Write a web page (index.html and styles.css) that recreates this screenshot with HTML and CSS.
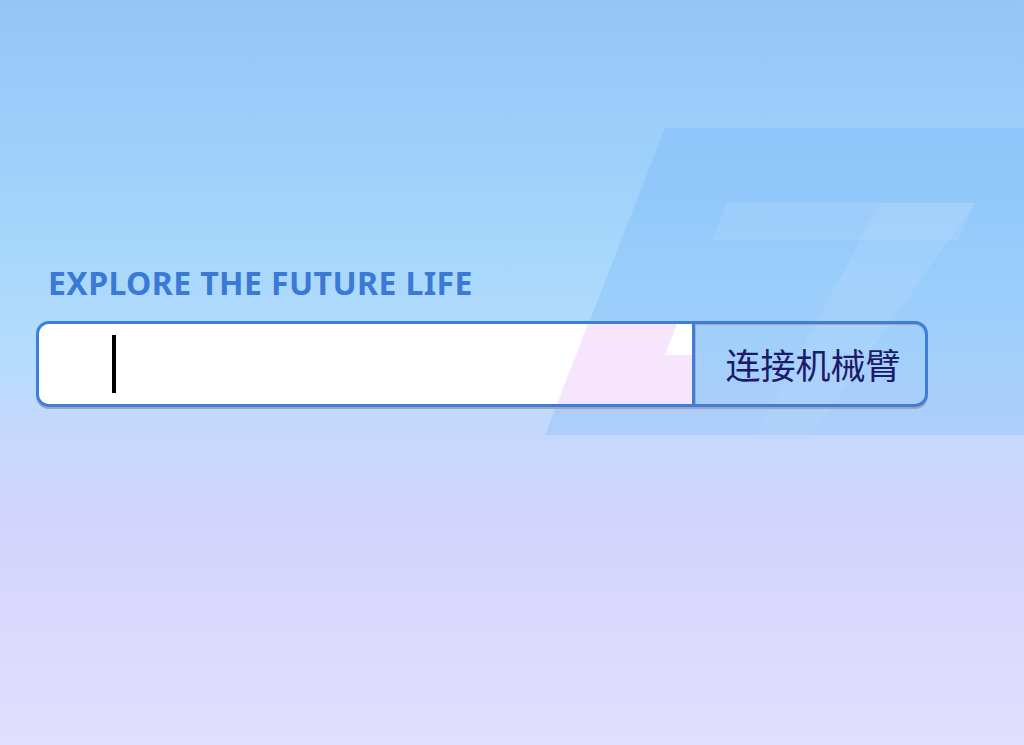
FILE: index.html
```html
<!DOCTYPE html>
<html lang="zh">
<head>
<meta charset="utf-8">
<title>Explore the future life</title>
<link rel="stylesheet" href="styles.css">
</head>
<body>
<div class="page">
  <svg class="bg-art" width="1024" height="745" viewBox="0 0 1024 745" aria-hidden="true">
    <polygon class="shape-main" points="665,128 1024,128 1024,435 545,435"/>
    <polygon class="shape-light" points="727,203 975,203 958,240 712,240"/>
    <polygon class="shape-light" points="880,203 975,203 810,437 755,437"/>
  </svg>
  <main class="content">
    <h1 class="title">EXPLORE THE FUTURE LIFE</h1>
    <div class="connect-bar">
      <div class="field">
        <svg class="field-art" width="653" height="80" viewBox="0 0 653 80" aria-hidden="true">
          <polygon class="field-pink" points="549,0 653,0 653,80 518,80"/>
          <polygon class="field-white" points="638,0 653,0 653,31 626,31"/>
        </svg>
        <span class="caret"></span>
      </div>
      <button class="connect-btn" type="button">连接机械臂</button>
    </div>
  </main>
</div>
</body>
</html>
```
FILE: styles.css
```css
html, body {
  margin: 0;
  padding: 0;
}
body {
  width: 1024px;
  height: 745px;
  overflow: hidden;
  font-family: "Noto Sans", "Noto Sans CJK SC", sans-serif;
  background: linear-gradient(180deg,
    #93c6f6 0px,
    #9dd0fa 160px,
    #a8d8fc 270px,
    #b6dcfc 360px,
    #c6d8fc 440px,
    #d2d4fc 520px,
    #dbd8fd 620px,
    #e2defe 745px);
}
.page {
  position: relative;
  width: 1024px;
  height: 745px;
}
.bg-art {
  position: absolute;
  left: 0;
  top: 0;
  z-index: 0;
}
.shape-main {
  fill: rgba(110, 175, 248, 0.26);
}
.shape-light {
  fill: rgba(190, 225, 255, 0.22);
}
.content {
  position: relative;
  z-index: 1;
  padding: 264px 0 0 36px;
}
.title {
  margin: 0 0 19px 12px;
  font-family: "Noto Sans", sans-serif;
  font-weight: 700;
  font-size: 32px;
  line-height: 38px;
  letter-spacing: 0.4px;
  color: #3b79d6;
}
.connect-bar {
  display: flex;
  width: 886px;
  height: 80px;
  border: 3px solid #3a80da;
  border-radius: 13px;
  overflow: hidden;
  box-shadow: 0 2px 0 #a4a2b4, inset 0 1px 0 #a6a8b8;
}
.field {
  position: relative;
  width: 653px;
  height: 80px;
  background: #ffffff;
  border-right: 3px solid #3a80da;
  box-shadow: 1px 0 0 #a8aabb;
}
.field-art {
  position: absolute;
  left: 0;
  top: 0;
}
.field-pink {
  fill: #f7e4fd;
}
.field-white {
  fill: #ffffff;
}
.caret {
  position: absolute;
  left: 73px;
  top: 11px;
  width: 4px;
  height: 58px;
  background: #000000;
}
.connect-btn {
  flex: 1;
  margin: 0;
  padding: 0 0 2px 6px;
  border: 0;
  background: transparent;
  font-family: "Noto Sans CJK SC", sans-serif;
  font-size: 35px;
  font-weight: 400;
  color: #1d1a6a;
  cursor: pointer;
}
```
